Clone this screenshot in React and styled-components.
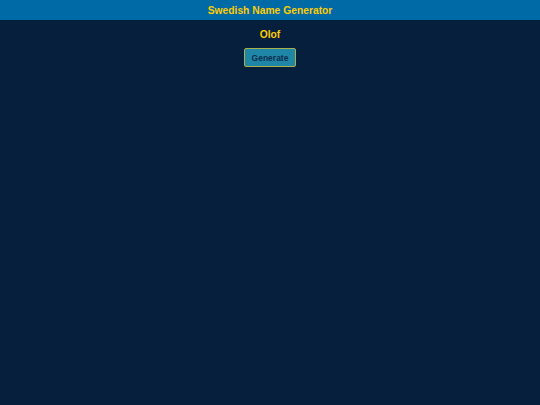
import React, { useState } from 'react';
import styled, { createGlobalStyle } from 'styled-components';

const GlobalStyle = createGlobalStyle`
  html, body {
    margin: 0;
    padding: 0;
    height: 100%;
    background-color: #061f3d;
  }
  #root {
    min-height: 100vh;
  }
`;

const Page = styled.div`
  min-height: 100vh;
  background-color: #061f3d;
  font-family: "Liberation Sans", Arial, sans-serif;
  display: flex;
  flex-direction: column;
  align-items: center;
`;

const Header = styled.header`
  width: 100%;
  height: 20px;
  background-color: #006aa7;
  color: #fecc02;
  display: flex;
  align-items: center;
  justify-content: center;
`;

const Title = styled.h1`
  font-size: 10.3px;
  font-weight: bold;
  margin: 0;
`;

const Name = styled.div`
  color: #fecc02;
  font-size: 10.3px;
  font-weight: bold;
  margin-top: 8px;
  line-height: 13px;
`;

const Button = styled.button`
  margin-top: 7px;
  width: 52px;
  height: 19px;
  padding: 0;
  background-color: #1f86a8;
  border: 1.5px solid #a9b04a;
  border-radius: 2px;
  color: #0b2f4e;
  font-family: "Liberation Sans", Arial, sans-serif;
  font-size: 8.5px;
  font-weight: bold;
  cursor: pointer;
`;

const names = ['Olof', 'Erik', 'Lars', 'Anders', 'Karl', 'Nils', 'Sven', 'Gustav', 'Astrid', 'Ingrid'];

const App = () => {
  const [name, setName] = useState('Olof');

  const handleClick = () => {
    setName(names[Math.floor(Math.random() * names.length)]);
  };

  return (
    <>
      <GlobalStyle />
      <Page>
        <Header>
          <Title>Swedish Name Generator</Title>
        </Header>
        <Name>{name}</Name>
        <Button onClick={handleClick}>Generate</Button>
      </Page>
    </>
  );
};

export default App;
